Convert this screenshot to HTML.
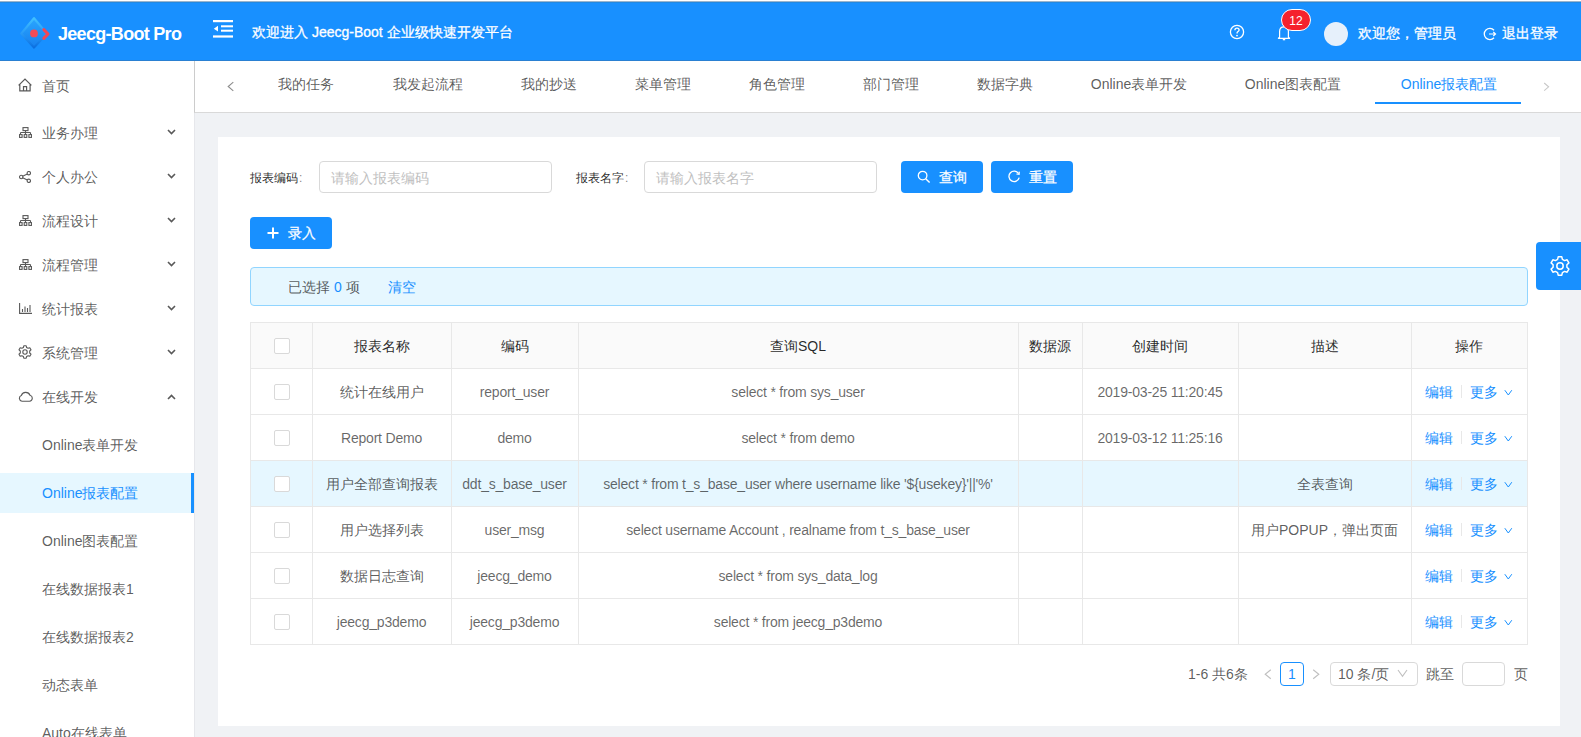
<!DOCTYPE html>
<html><head><meta charset="utf-8">
<style>
*{box-sizing:border-box;margin:0;padding:0}
html,body{width:1581px;height:737px;overflow:hidden;background:#f0f2f5;font-family:"Liberation Sans",sans-serif;font-size:14px;color:rgba(0,0,0,.65)}
.abs{position:absolute}
.txt{position:absolute;white-space:nowrap;line-height:1}
.mi{color:rgba(0,0,0,.65);font-size:14px}
.inp{background:#fff;border:1px solid #d9d9d9;border-radius:4px}
.btn{background:#1890ff;border-radius:4px}
.cb{width:16px;height:16px;border:1px solid #d9d9d9;border-radius:2px;background:#fff}
</style></head><body>
<div class="abs" style="left:0;top:0;width:1581px;height:3px;background:linear-gradient(#fff 0,#fff 1px,#9ab4cc 1px,#9ab4cc 2px,#2389e0 2px,#2389e0 3px)"></div>
<div class="abs" style="left:0;top:3px;width:1581px;height:58px;background:#1890ff"></div>
<div class="abs" style="left:0;top:61px;width:194px;height:676px;background:#fff"></div>
<div class="abs" style="left:194px;top:61px;width:1px;height:676px;background:#e6e7eb"></div>
<div class="abs" style="left:0;top:60px;width:1581px;height:1px;background:#2a80d2"></div>
<div class="abs" style="left:194px;top:61px;width:1387px;height:52px;background:#fff;border-bottom:1px solid #d9d9d9;border-left:1px solid #ccc"></div>
<div class="abs" style="left:218px;top:137px;width:1342px;height:589px;background:#fff"></div>
<svg class="abs" style="left:17px;top:15px" width="36" height="36" viewBox="0 0 36 36">
<defs><linearGradient id="lg" x1="0" y1="0" x2="0" y2="1"><stop offset="0" stop-color="#40c0ff"/><stop offset="0.5" stop-color="#2a9cf8"/><stop offset="1" stop-color="#0b6fe0"/></linearGradient>
<linearGradient id="lf" x1="0" y1="0" x2="0" y2="1"><stop offset="0" stop-color="#2aa6ff"/><stop offset="1" stop-color="#167fee"/></linearGradient></defs>
<path d="M17 3.2 L30 18.6 L17 32.6 L4.2 18.6 Z" fill="url(#lf)" stroke="url(#lg)" stroke-width="2.2" stroke-linejoin="round"/>
<circle cx="17" cy="18.4" r="3.9" fill="#f24c57"/>
<path d="M26.8 14.6 L31 19 L26.8 23.4" fill="none" stroke="#f04656" stroke-width="3" stroke-linecap="round" stroke-linejoin="round"/></svg>
<div class="txt" style="left:58px;top:25px;font-size:18px;font-weight:bold;letter-spacing:-0.7px;color:#fff">Jeecg-Boot Pro</div>
<svg class="abs" style="left:213px;top:20px" width="20" height="18" viewBox="0 0 20 18">
<rect x="0" y="0" width="20" height="2.2" fill="#fff"/><rect x="8" y="5.3" width="12" height="2" fill="#fff"/>
<rect x="8" y="9.7" width="12" height="2" fill="#fff"/><rect x="0" y="15.4" width="20" height="2.2" fill="#fff"/>
<path d="M0.8 8.7 L5 5.8 L5 11.6 Z" fill="#fff"/></svg>
<div class="txt" style="left:252px;top:25px;font-size:14px;color:#fff;-webkit-text-stroke:0.3px #fff">欢迎进入 Jeecg-Boot 企业级快速开发平台</div>
<svg class="abs" style="left:1229px;top:24px" width="16" height="16" viewBox="0 0 16 16"><circle cx="8" cy="8" r="6.6" fill="none" stroke="#fff" stroke-width="1.3"/><path d="M5.9 6.3 C5.9 4.9 7 4.2 8 4.2 C9.1 4.2 10.1 4.9 10.1 6.1 C10.1 7.4 8.4 7.6 8.1 8.7 L8.1 9.5" fill="none" stroke="#fff" stroke-width="1.3"/><circle cx="8" cy="11.6" r=".9" fill="#fff"/></svg>
<svg class="abs" style="left:1277px;top:25px" width="14" height="16" viewBox="0 0 14 16"><path d="M2.6 12.2 L2.6 6.6 C2.6 3.8 4.4 1.8 7 1.8 C9.6 1.8 11.4 3.8 11.4 6.6 L11.4 12.2 L12.6 13.3 L1.4 13.3 Z" fill="none" stroke="#fff" stroke-width="1.2" stroke-linejoin="round"/><path d="M5.8 14.6 L8.2 14.6" stroke="#fff" stroke-width="1.4"/></svg>
<div class="abs" style="left:1281px;top:9px;width:30px;height:22px;border-radius:11px;background:#f5222d;border:1px solid #fff;color:#fff;font-size:12px;text-align:center;line-height:22px">12</div>
<div class="abs" style="left:1324px;top:22px;width:24px;height:24px;border-radius:12px;background:#e6f0fb"></div>
<div class="txt" style="left:1358px;top:26px;font-size:14px;color:#fff;-webkit-text-stroke:0.3px #fff">欢迎您，管理员</div>
<svg class="abs" style="left:1483px;top:27px" width="14" height="14" viewBox="0 0 14 14"><path d="M11 3.2 A5.6 5.6 0 1 0 11 10.8" fill="none" stroke="#fff" stroke-width="1.3"/><path d="M6 7 L12.5 7 M10.3 5 L12.5 7 L10.3 9" fill="none" stroke="#fff" stroke-width="1.2"/></svg>
<div class="txt" style="left:1502px;top:26px;font-size:14px;color:#fff;-webkit-text-stroke:0.3px #fff">退出登录</div>
<svg class="abs" style="left:18px;top:78px" width="14" height="14" viewBox="0 0 14 14"><path d="M0.6 7.4 L7 1 L13.4 7.4 M1.8 6.2 L1.8 12.9 L12.1 12.9 L12.1 6.2 M5.5 12.9 L5.5 8.6 L8.6 8.6 L8.6 12.9" fill="none" stroke="#595959" stroke-width="1.2"/></svg>
<div class="txt mi" style="left:42px;top:79px">首页</div>
<svg class="abs" style="left:19px;top:127px" width="13" height="11" viewBox="0 0 13 11"><rect x="4" y="0.6" width="5" height="3" fill="none" stroke="#595959" stroke-width="1.1"/><path d="M6.5 3.6 V5.5 M1.5 5.5 H11.5 M1.5 5.5 V7.5 M6.5 5.5 V7.5 M11.5 5.5 V7.5" fill="none" stroke="#595959" stroke-width="1.1"/><rect x="0.5" y="7.6" width="2.6" height="2.8" fill="none" stroke="#595959" stroke-width="1.1"/><rect x="5.2" y="7.6" width="2.6" height="2.8" fill="none" stroke="#595959" stroke-width="1.1"/><rect x="9.9" y="7.6" width="2.6" height="2.8" fill="none" stroke="#595959" stroke-width="1.1"/></svg><div class="txt mi" style="left:42px;top:126px">业务办理</div>
<svg class="abs" style="left:167px;top:129px" width="9" height="6" viewBox="0 0 9 6"><path d="M1 1 L4.5 4.5 L8 1" fill="none" stroke="#595959" stroke-width="1.6"/></svg>
<svg class="abs" style="left:19px;top:171px" width="12" height="12" viewBox="0 0 12 12"><circle cx="2.2" cy="6" r="1.7" fill="none" stroke="#595959" stroke-width="1.1"/><circle cx="9.8" cy="2.2" r="1.7" fill="none" stroke="#595959" stroke-width="1.1"/><circle cx="9.8" cy="9.8" r="1.7" fill="none" stroke="#595959" stroke-width="1.1"/><path d="M3.7 5.2 L8.3 3 M3.7 6.8 L8.3 9" stroke="#595959" stroke-width="1.1"/></svg><div class="txt mi" style="left:42px;top:170px">个人办公</div>
<svg class="abs" style="left:167px;top:173px" width="9" height="6" viewBox="0 0 9 6"><path d="M1 1 L4.5 4.5 L8 1" fill="none" stroke="#595959" stroke-width="1.6"/></svg>
<svg class="abs" style="left:19px;top:215px" width="13" height="11" viewBox="0 0 13 11"><rect x="4" y="0.6" width="5" height="3" fill="none" stroke="#595959" stroke-width="1.1"/><path d="M6.5 3.6 V5.5 M1.5 5.5 H11.5 M1.5 5.5 V7.5 M6.5 5.5 V7.5 M11.5 5.5 V7.5" fill="none" stroke="#595959" stroke-width="1.1"/><rect x="0.5" y="7.6" width="2.6" height="2.8" fill="none" stroke="#595959" stroke-width="1.1"/><rect x="5.2" y="7.6" width="2.6" height="2.8" fill="none" stroke="#595959" stroke-width="1.1"/><rect x="9.9" y="7.6" width="2.6" height="2.8" fill="none" stroke="#595959" stroke-width="1.1"/></svg><div class="txt mi" style="left:42px;top:214px">流程设计</div>
<svg class="abs" style="left:167px;top:217px" width="9" height="6" viewBox="0 0 9 6"><path d="M1 1 L4.5 4.5 L8 1" fill="none" stroke="#595959" stroke-width="1.6"/></svg>
<svg class="abs" style="left:19px;top:259px" width="13" height="11" viewBox="0 0 13 11"><rect x="4" y="0.6" width="5" height="3" fill="none" stroke="#595959" stroke-width="1.1"/><path d="M6.5 3.6 V5.5 M1.5 5.5 H11.5 M1.5 5.5 V7.5 M6.5 5.5 V7.5 M11.5 5.5 V7.5" fill="none" stroke="#595959" stroke-width="1.1"/><rect x="0.5" y="7.6" width="2.6" height="2.8" fill="none" stroke="#595959" stroke-width="1.1"/><rect x="5.2" y="7.6" width="2.6" height="2.8" fill="none" stroke="#595959" stroke-width="1.1"/><rect x="9.9" y="7.6" width="2.6" height="2.8" fill="none" stroke="#595959" stroke-width="1.1"/></svg><div class="txt mi" style="left:42px;top:258px">流程管理</div>
<svg class="abs" style="left:167px;top:261px" width="9" height="6" viewBox="0 0 9 6"><path d="M1 1 L4.5 4.5 L8 1" fill="none" stroke="#595959" stroke-width="1.6"/></svg>
<svg class="abs" style="left:19px;top:303px" width="13" height="11" viewBox="0 0 13 11"><path d="M0.6 0 V10.4 H13 M3.5 9 V6 M6 9 V3.5 M8.5 9 V5 M11 9 V2" fill="none" stroke="#595959" stroke-width="1.1"/></svg><div class="txt mi" style="left:42px;top:302px">统计报表</div>
<svg class="abs" style="left:167px;top:305px" width="9" height="6" viewBox="0 0 9 6"><path d="M1 1 L4.5 4.5 L8 1" fill="none" stroke="#595959" stroke-width="1.6"/></svg>
<svg class="abs" style="left:18px;top:345px" width="14" height="14" viewBox="0 0 14 14"><path d="M5.8 0.8 H8.2 L8.6 2.5 L10.1 3.3 L11.8 2.7 L13 4.8 L11.7 6 V8 L13 9.2 L11.8 11.3 L10.1 10.7 L8.6 11.5 L8.2 13.2 H5.8 L5.4 11.5 L3.9 10.7 L2.2 11.3 L1 9.2 L2.3 8 V6 L1 4.8 L2.2 2.7 L3.9 3.3 L5.4 2.5 Z" fill="none" stroke="#595959" stroke-width="1.1" stroke-linejoin="round"/><circle cx="7" cy="7" r="2.2" fill="none" stroke="#595959" stroke-width="1.1"/></svg><div class="txt mi" style="left:42px;top:346px">系统管理</div>
<svg class="abs" style="left:167px;top:349px" width="9" height="6" viewBox="0 0 9 6"><path d="M1 1 L4.5 4.5 L8 1" fill="none" stroke="#595959" stroke-width="1.6"/></svg>
<svg class="abs" style="left:18px;top:391px" width="15" height="11" viewBox="0 0 15 11"><path d="M4 10.2 H11.5 A3 3 0 0 0 12 4.3 A4.6 4.6 0 0 0 3.3 4.6 A2.9 2.9 0 0 0 4 10.2 Z" fill="none" stroke="#595959" stroke-width="1.1"/></svg><div class="txt mi" style="left:42px;top:390px">在线开发</div>
<svg class="abs" style="left:167px;top:394px" width="9" height="6" viewBox="0 0 9 6"><path d="M1 5 L4.5 1.5 L8 5" fill="none" stroke="#595959" stroke-width="1.6"/></svg>
<div class="abs" style="left:0;top:473px;width:194px;height:40px;background:#e6f7ff;border-right:3px solid #1890ff"></div>
<div class="txt mi" style="left:42px;top:438px">Online表单开发</div>
<div class="txt mi" style="left:42px;top:486px;color:#1890ff">Online报表配置</div>
<div class="txt mi" style="left:42px;top:534px">Online图表配置</div>
<div class="txt mi" style="left:42px;top:582px">在线数据报表1</div>
<div class="txt mi" style="left:42px;top:630px">在线数据报表2</div>
<div class="txt mi" style="left:42px;top:678px">动态表单</div>
<div class="txt mi" style="left:42px;top:726px">Auto在线表单</div>
<svg class="abs" style="left:227px;top:81px" width="8" height="11" viewBox="0 0 8 11"><path d="M6.3 1.2 L1.2 5.5 L6.3 9.8" fill="none" stroke="#8c8c8c" stroke-width="1.1"/></svg>
<svg class="abs" style="left:1543px;top:82px" width="7" height="10" viewBox="0 0 7 10"><path d="M1.2 1 L5.6 4.8 L1.2 8.6" fill="none" stroke="#c8c8c8" stroke-width="1.1"/></svg>
<div class="txt mi" style="left:206px;top:77px;width:200px;text-align:center">我的任务</div>
<div class="txt mi" style="left:328px;top:77px;width:200px;text-align:center">我发起流程</div>
<div class="txt mi" style="left:449px;top:77px;width:200px;text-align:center">我的抄送</div>
<div class="txt mi" style="left:563px;top:77px;width:200px;text-align:center">菜单管理</div>
<div class="txt mi" style="left:677px;top:77px;width:200px;text-align:center">角色管理</div>
<div class="txt mi" style="left:791px;top:77px;width:200px;text-align:center">部门管理</div>
<div class="txt mi" style="left:905px;top:77px;width:200px;text-align:center">数据字典</div>
<div class="txt mi" style="left:1039px;top:77px;width:200px;text-align:center">Online表单开发</div>
<div class="txt mi" style="left:1193px;top:77px;width:200px;text-align:center">Online图表配置</div>
<div class="txt mi" style="left:1349px;top:77px;width:200px;text-align:center;color:#1890ff">Online报表配置</div>
<div class="abs" style="left:1375px;top:102px;width:146px;height:2px;background:#1890ff"></div>
<div class="txt" style="left:250px;top:172px;font-size:12px;color:rgba(0,0,0,.85)">报表编码<span style="margin-left:1px;color:rgba(0,0,0,.5)">:</span></div>
<div class="abs inp" style="left:319px;top:161px;width:233px;height:32px"></div>
<div class="txt" style="left:331px;top:171px;font-size:14px;color:#bfbfbf">请输入报表编码</div>
<div class="txt" style="left:576px;top:172px;font-size:12px;color:rgba(0,0,0,.85)">报表名字<span style="margin-left:1px;color:rgba(0,0,0,.5)">:</span></div>
<div class="abs inp" style="left:644px;top:161px;width:233px;height:32px"></div>
<div class="txt" style="left:656px;top:171px;font-size:14px;color:#bfbfbf">请输入报表名字</div>
<div class="abs btn" style="left:901px;top:161px;width:82px;height:32px"></div>
<svg class="abs" style="left:917px;top:170px" width="14" height="14" viewBox="0 0 14 14"><circle cx="5.6" cy="5.6" r="4.3" fill="none" stroke="#fff" stroke-width="1.3"/><path d="M8.7 8.7 L12.6 12.6" stroke="#fff" stroke-width="1.4"/></svg>
<div class="txt" style="left:939px;top:170px;font-size:14px;color:#fff;-webkit-text-stroke:0.25px #fff">查询</div>
<div class="abs btn" style="left:991px;top:161px;width:82px;height:32px"></div>
<svg class="abs" style="left:1007px;top:170px" width="14" height="14" viewBox="0 0 14 14"><path d="M11.6 3.6 A5.2 5.2 0 1 0 12.2 7.6" fill="none" stroke="#fff" stroke-width="1.3"/><path d="M12.3 1.6 L12.1 4.4 L9.4 4" fill="none" stroke="#fff" stroke-width="1.2"/></svg>
<div class="txt" style="left:1029px;top:170px;font-size:14px;color:#fff;-webkit-text-stroke:0.25px #fff">重置</div>
<div class="abs btn" style="left:250px;top:217px;width:82px;height:32px"></div>
<svg class="abs" style="left:267px;top:227px" width="12" height="12" viewBox="0 0 12 12"><path d="M6 0.5 V11.5 M0.5 6 H11.5" stroke="#fff" stroke-width="2"/></svg>
<div class="txt" style="left:288px;top:226px;font-size:14px;color:#fff;-webkit-text-stroke:0.25px #fff">录入</div>
<div class="abs" style="left:250px;top:267px;width:1278px;height:39px;background:#e6f7ff;border:1px solid #91d5ff;border-radius:4px"></div>
<div class="txt" style="left:288px;top:280px;font-size:14px;color:rgba(0,0,0,.65)">已选择 <span style="color:#1890ff">0</span> 项</div>
<div class="txt" style="left:388px;top:280px;font-size:14px;color:#1890ff">清空</div>
<div class="abs" style="left:1536px;top:242px;width:45px;height:48px;background:#1890ff;border-radius:4px 0 0 4px"></div>
<svg class="abs" style="left:1549px;top:255px" width="22" height="22" viewBox="0 0 22 22"><path d="M9.2 1.8 H12.8 L13.4 4.4 L15.6 5.6 L18.1 4.8 L19.9 7.9 L17.9 9.7 V12.3 L19.9 14.1 L18.1 17.2 L15.6 16.4 L13.4 17.6 L12.8 20.2 H9.2 L8.6 17.6 L6.4 16.4 L3.9 17.2 L2.1 14.1 L4.1 12.3 V9.7 L2.1 7.9 L3.9 4.8 L6.4 5.6 L8.6 4.4 Z" fill="none" stroke="#fff" stroke-width="1.5" stroke-linejoin="round"/><circle cx="11" cy="11" r="3.2" fill="none" stroke="#fff" stroke-width="1.5"/></svg>
<div class="abs" style="left:250px;top:322px;width:1278px;height:47px;background:#fafafa"></div>
<div class="abs" style="left:250px;top:461px;width:1278px;height:45px;background:#e6f7ff"></div>
<div class="abs" style="left:250px;top:322px;width:1278px;height:1px;background:#e8e8e8"></div>
<div class="abs" style="left:250px;top:368px;width:1278px;height:1px;background:#e8e8e8"></div>
<div class="abs" style="left:250px;top:414px;width:1278px;height:1px;background:#e8e8e8"></div>
<div class="abs" style="left:250px;top:460px;width:1278px;height:1px;background:#e8e8e8"></div>
<div class="abs" style="left:250px;top:506px;width:1278px;height:1px;background:#e8e8e8"></div>
<div class="abs" style="left:250px;top:552px;width:1278px;height:1px;background:#e8e8e8"></div>
<div class="abs" style="left:250px;top:598px;width:1278px;height:1px;background:#e8e8e8"></div>
<div class="abs" style="left:250px;top:644px;width:1278px;height:1px;background:#e8e8e8"></div>
<div class="abs" style="left:250px;top:322px;width:1px;height:323px;background:#e8e8e8"></div>
<div class="abs" style="left:312px;top:322px;width:1px;height:323px;background:#e8e8e8"></div>
<div class="abs" style="left:451px;top:322px;width:1px;height:323px;background:#e8e8e8"></div>
<div class="abs" style="left:578px;top:322px;width:1px;height:323px;background:#e8e8e8"></div>
<div class="abs" style="left:1018px;top:322px;width:1px;height:323px;background:#e8e8e8"></div>
<div class="abs" style="left:1082px;top:322px;width:1px;height:323px;background:#e8e8e8"></div>
<div class="abs" style="left:1238px;top:322px;width:1px;height:323px;background:#e8e8e8"></div>
<div class="abs" style="left:1411px;top:322px;width:1px;height:323px;background:#e8e8e8"></div>
<div class="abs" style="left:1527px;top:322px;width:1px;height:323px;background:#e8e8e8"></div>
<div class="txt" style="left:312px;top:339px;width:139px;text-align:center;color:rgba(0,0,0,.85)">报表名称</div>
<div class="txt" style="left:451px;top:339px;width:127px;text-align:center;color:rgba(0,0,0,.85)">编码</div>
<div class="txt" style="left:578px;top:339px;width:440px;text-align:center;color:rgba(0,0,0,.85)">查询SQL</div>
<div class="txt" style="left:1018px;top:339px;width:64px;text-align:center;color:rgba(0,0,0,.85)">数据源</div>
<div class="txt" style="left:1082px;top:339px;width:156px;text-align:center;color:rgba(0,0,0,.85)">创建时间</div>
<div class="txt" style="left:1238px;top:339px;width:173px;text-align:center;color:rgba(0,0,0,.85)">描述</div>
<div class="txt" style="left:1411px;top:339px;width:116px;text-align:center;color:rgba(0,0,0,.85)">操作</div>
<div class="abs cb" style="left:274px;top:384px"></div>
<div class="txt" style="left:312px;top:385px;width:139px;text-align:center;color:rgba(0,0,0,.65)">统计在线用户</div>
<div class="txt" style="left:451px;top:385px;width:127px;text-align:center;letter-spacing:-0.2px;color:rgba(0,0,0,.6)">report_user</div>
<div class="txt" style="left:578px;top:385px;width:440px;text-align:center;letter-spacing:-0.2px;color:rgba(0,0,0,.6)">select * from sys_user</div>
<div class="txt" style="left:1082px;top:385px;width:156px;text-align:center;letter-spacing:-0.2px;color:rgba(0,0,0,.6)">2019-03-25 11:20:45</div>
<div class="txt" style="left:1425px;top:385px;color:#1890ff">编辑</div>
<div class="abs" style="left:1461px;top:385px;width:1px;height:13px;background:#e8e8e8"></div>
<div class="txt" style="left:1470px;top:385px;color:#1890ff">更多</div>
<svg class="abs" style="left:1504px;top:389px" width="9" height="8" viewBox="0 0 9 8"><path d="M0.8 1.2 L4.3 6 L7.8 1.2" fill="none" stroke="#1890ff" stroke-width="1"/></svg>
<div class="abs cb" style="left:274px;top:430px"></div>
<div class="txt" style="left:312px;top:431px;width:139px;text-align:center;letter-spacing:-0.2px;color:rgba(0,0,0,.6)">Report Demo</div>
<div class="txt" style="left:451px;top:431px;width:127px;text-align:center;letter-spacing:-0.2px;color:rgba(0,0,0,.6)">demo</div>
<div class="txt" style="left:578px;top:431px;width:440px;text-align:center;letter-spacing:-0.2px;color:rgba(0,0,0,.6)">select * from demo</div>
<div class="txt" style="left:1082px;top:431px;width:156px;text-align:center;letter-spacing:-0.2px;color:rgba(0,0,0,.6)">2019-03-12 11:25:16</div>
<div class="txt" style="left:1425px;top:431px;color:#1890ff">编辑</div>
<div class="abs" style="left:1461px;top:431px;width:1px;height:13px;background:#e8e8e8"></div>
<div class="txt" style="left:1470px;top:431px;color:#1890ff">更多</div>
<svg class="abs" style="left:1504px;top:435px" width="9" height="8" viewBox="0 0 9 8"><path d="M0.8 1.2 L4.3 6 L7.8 1.2" fill="none" stroke="#1890ff" stroke-width="1"/></svg>
<div class="abs cb" style="left:274px;top:476px"></div>
<div class="txt" style="left:312px;top:477px;width:139px;text-align:center;color:rgba(0,0,0,.65)">用户全部查询报表</div>
<div class="txt" style="left:451px;top:477px;width:127px;text-align:center;letter-spacing:-0.2px;color:rgba(0,0,0,.6)">ddt_s_base_user</div>
<div class="txt" style="left:578px;top:477px;width:440px;text-align:center;letter-spacing:-0.2px;color:rgba(0,0,0,.6)">select * from t_s_base_user where username like '${usekey}'||'%'</div>
<div class="txt" style="left:1238px;top:477px;width:173px;text-align:center;color:rgba(0,0,0,.65)">全表查询</div>
<div class="txt" style="left:1425px;top:477px;color:#1890ff">编辑</div>
<div class="abs" style="left:1461px;top:477px;width:1px;height:13px;background:#e8e8e8"></div>
<div class="txt" style="left:1470px;top:477px;color:#1890ff">更多</div>
<svg class="abs" style="left:1504px;top:481px" width="9" height="8" viewBox="0 0 9 8"><path d="M0.8 1.2 L4.3 6 L7.8 1.2" fill="none" stroke="#1890ff" stroke-width="1"/></svg>
<div class="abs cb" style="left:274px;top:522px"></div>
<div class="txt" style="left:312px;top:523px;width:139px;text-align:center;color:rgba(0,0,0,.65)">用户选择列表</div>
<div class="txt" style="left:451px;top:523px;width:127px;text-align:center;letter-spacing:-0.2px;color:rgba(0,0,0,.6)">user_msg</div>
<div class="txt" style="left:578px;top:523px;width:440px;text-align:center;letter-spacing:-0.2px;color:rgba(0,0,0,.6)">select username Account , realname from t_s_base_user</div>
<div class="txt" style="left:1238px;top:523px;width:173px;text-align:center;color:rgba(0,0,0,.65)">用户POPUP，弹出页面</div>
<div class="txt" style="left:1425px;top:523px;color:#1890ff">编辑</div>
<div class="abs" style="left:1461px;top:523px;width:1px;height:13px;background:#e8e8e8"></div>
<div class="txt" style="left:1470px;top:523px;color:#1890ff">更多</div>
<svg class="abs" style="left:1504px;top:527px" width="9" height="8" viewBox="0 0 9 8"><path d="M0.8 1.2 L4.3 6 L7.8 1.2" fill="none" stroke="#1890ff" stroke-width="1"/></svg>
<div class="abs cb" style="left:274px;top:568px"></div>
<div class="txt" style="left:312px;top:569px;width:139px;text-align:center;color:rgba(0,0,0,.65)">数据日志查询</div>
<div class="txt" style="left:451px;top:569px;width:127px;text-align:center;letter-spacing:-0.2px;color:rgba(0,0,0,.6)">jeecg_demo</div>
<div class="txt" style="left:578px;top:569px;width:440px;text-align:center;letter-spacing:-0.2px;color:rgba(0,0,0,.6)">select * from sys_data_log</div>
<div class="txt" style="left:1425px;top:569px;color:#1890ff">编辑</div>
<div class="abs" style="left:1461px;top:569px;width:1px;height:13px;background:#e8e8e8"></div>
<div class="txt" style="left:1470px;top:569px;color:#1890ff">更多</div>
<svg class="abs" style="left:1504px;top:573px" width="9" height="8" viewBox="0 0 9 8"><path d="M0.8 1.2 L4.3 6 L7.8 1.2" fill="none" stroke="#1890ff" stroke-width="1"/></svg>
<div class="abs cb" style="left:274px;top:614px"></div>
<div class="txt" style="left:312px;top:615px;width:139px;text-align:center;letter-spacing:-0.2px;color:rgba(0,0,0,.6)">jeecg_p3demo</div>
<div class="txt" style="left:451px;top:615px;width:127px;text-align:center;letter-spacing:-0.2px;color:rgba(0,0,0,.6)">jeecg_p3demo</div>
<div class="txt" style="left:578px;top:615px;width:440px;text-align:center;letter-spacing:-0.2px;color:rgba(0,0,0,.6)">select * from jeecg_p3demo</div>
<div class="txt" style="left:1425px;top:615px;color:#1890ff">编辑</div>
<div class="abs" style="left:1461px;top:615px;width:1px;height:13px;background:#e8e8e8"></div>
<div class="txt" style="left:1470px;top:615px;color:#1890ff">更多</div>
<svg class="abs" style="left:1504px;top:619px" width="9" height="8" viewBox="0 0 9 8"><path d="M0.8 1.2 L4.3 6 L7.8 1.2" fill="none" stroke="#1890ff" stroke-width="1"/></svg>
<div class="abs cb" style="left:274px;top:338px"></div>
<div class="txt" style="left:1188px;top:667px;color:rgba(0,0,0,.65)">1-6 共6条</div>
<svg class="abs" style="left:1264px;top:669px" width="8" height="11" viewBox="0 0 8 11"><path d="M6.8 0.8 L1.2 5.3 L6.8 9.8" fill="none" stroke="#bfbfbf" stroke-width="1.1"/></svg>
<div class="abs" style="left:1280px;top:662px;width:24px;height:24px;border:1px solid #1890ff;border-radius:4px;color:#1890ff;text-align:center;line-height:22px;font-size:14px">1</div>
<svg class="abs" style="left:1312px;top:669px" width="8" height="11" viewBox="0 0 8 11"><path d="M1.2 0.8 L6.8 5.3 L1.2 9.8" fill="none" stroke="#bfbfbf" stroke-width="1.1"/></svg>
<div class="abs inp" style="left:1330px;top:662px;width:88px;height:24px"></div>
<div class="txt" style="left:1338px;top:667px;color:rgba(0,0,0,.65)">10 条/页</div>
<svg class="abs" style="left:1397px;top:669px" width="11" height="9" viewBox="0 0 11 9"><path d="M1 1 L5.5 7.2 L10 1" fill="none" stroke="#bfbfbf" stroke-width="1.1"/></svg>
<div class="txt" style="left:1426px;top:667px;color:rgba(0,0,0,.65)">跳至</div>
<div class="abs inp" style="left:1462px;top:662px;width:43px;height:24px"></div>
<div class="txt" style="left:1514px;top:667px;color:rgba(0,0,0,.65)">页</div>
</body></html>
